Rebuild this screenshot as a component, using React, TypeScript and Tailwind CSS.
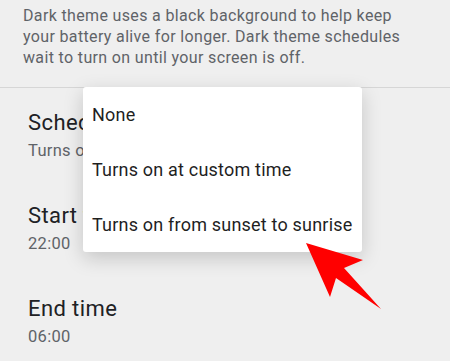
const options = ["None", "Turns on at custom time", "Turns on from sunset to sunrise"];

const rows = [
  { title: "Schedule", value: "Turns on at custom time" },
  { title: "Start time", value: "22:00" },
  { title: "End time", value: "06:00" },
];

export default function App() {
  return (
    <div className="relative h-[361px] w-[450px] overflow-hidden bg-[#efefef] font-['Roboto',sans-serif]">
      <p className="border-b border-[#d6d6d6] pt-[5px] pr-[40px] pb-[19px] pl-[23px] text-[16px] leading-[21px] tracking-[0.35px] text-[#5f6368]">
        Dark theme uses a black background to help keep your battery alive for longer. Dark theme schedules wait to turn
        on until your screen is off.
      </p>

      <div className="flex flex-col gap-[40px] px-[28px] pt-[21px]">
        {rows.map((row) => (
          <div key={row.title} className="flex flex-col gap-[3px]">
            <span className="text-[22px] leading-[28px] tracking-[0.4px] text-[#202124]">{row.title}</span>
            <span className="text-[16.5px] leading-[22px] tracking-[0.3px] text-[#5f6368]">{row.value}</span>
          </div>
        ))}
      </div>

      <ul className="absolute top-[87px] left-[83px] w-[279px] rounded-[3px] bg-white shadow-[0_6px_20px_rgba(0,0,0,0.18)]">
        {options.map((item) => (
          <li key={item} className="flex h-[55px] items-center pl-[9px] text-[18px] tracking-[0.2px] text-[#1f1f1f]">
            {item}
          </li>
        ))}
      </ul>

      <svg className="absolute top-0 left-0" width="450" height="361" viewBox="0 0 450 361">
        <polygon points="306,243 363,260 344,268 381,309 336,278 330,297" fill="#ff0000" />
      </svg>
    </div>
  );
}
